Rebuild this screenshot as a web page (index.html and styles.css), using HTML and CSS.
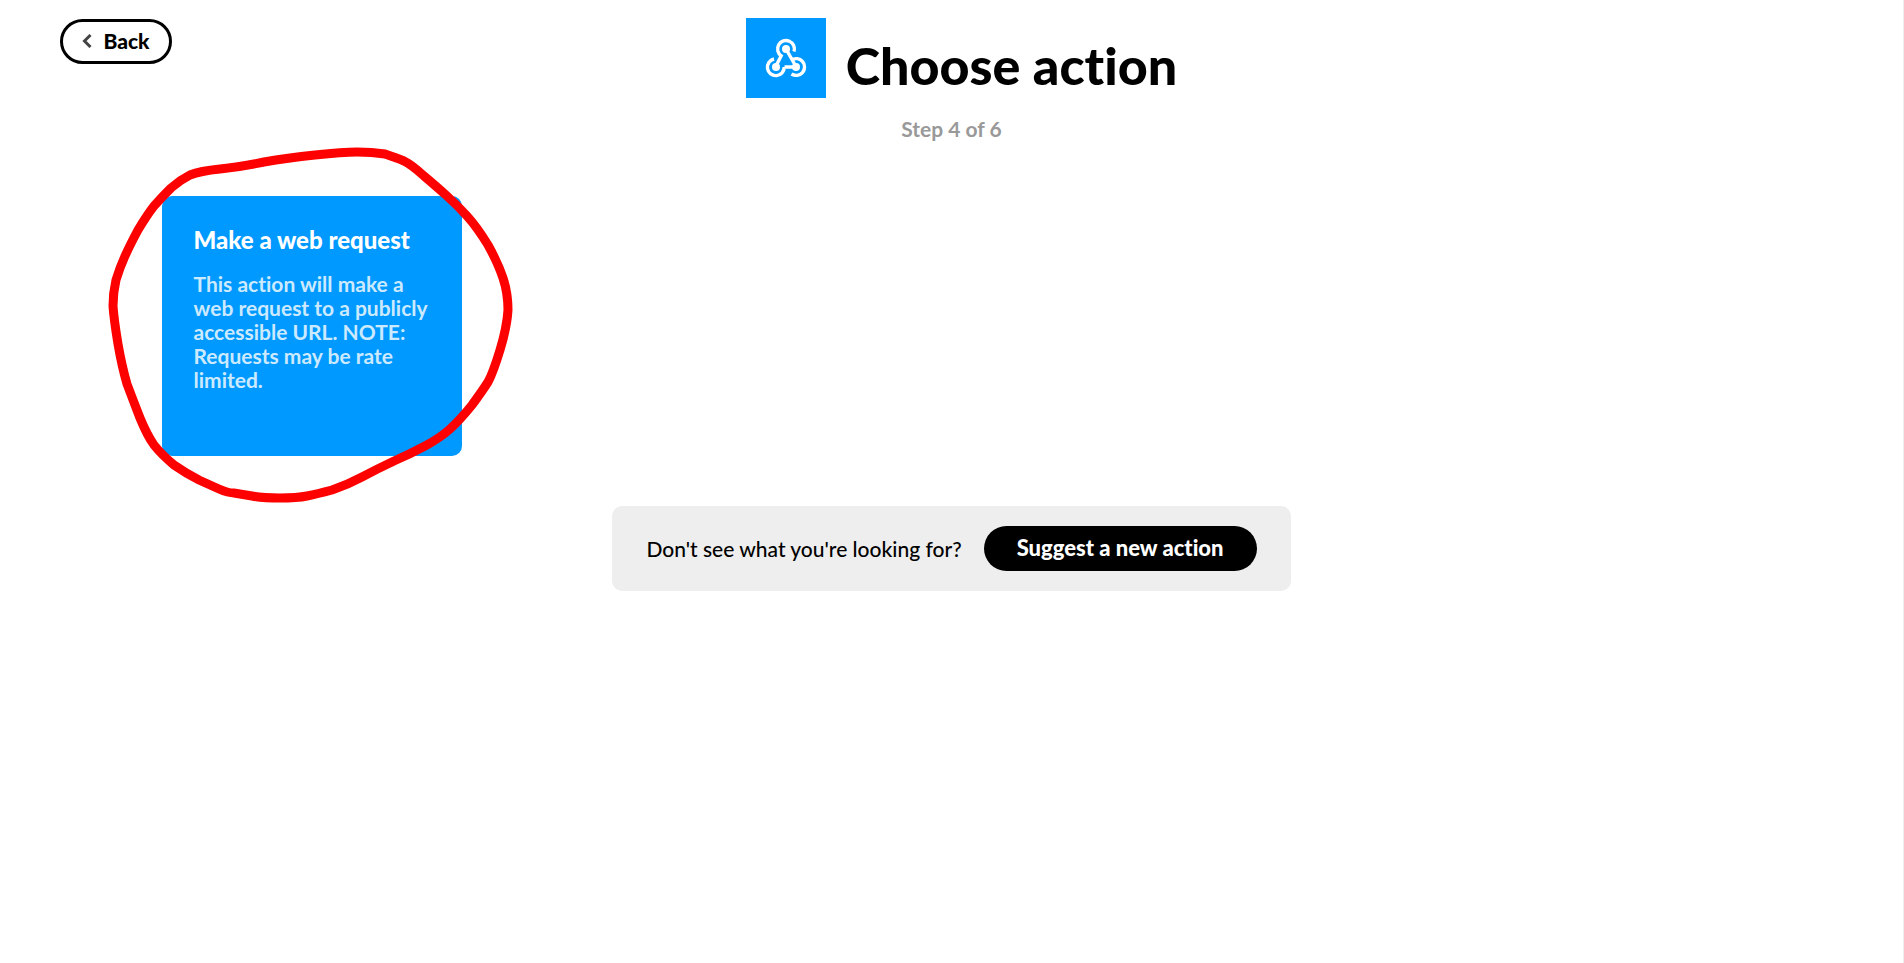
FILE: index.html
```html
<!DOCTYPE html>
<html lang="en">
<head>
    <meta charset="UTF-8">
    <meta name="viewport" content="width=device-width, initial-scale=1.0">
    <title>Choose action</title>
    <link rel="stylesheet" href="styles.css">
</head>
<body>
    <header class="header">
        <button class="back-btn" type="button">
            <svg class="back-arrow" viewBox="0 0 10 14" aria-hidden="true">
                <path d="M8.5 1 L2.5 7 L8.5 13" />
            </svg>
            Back
        </button>
        <div class="heading">
            <svg class="service-icon" viewBox="0 0 80 80" aria-hidden="true">
                <rect class="icon-bg" width="80" height="80" />
                <path class="icon-line" d="M40 31 L50 48.5 M51 49 H38.5" />
                <path class="icon-line" d="M48 33.5 A8.4 8.4 0 1 0 35.2 37.8 L30 48" />
                <path class="icon-line" d="M28 41 A8.4 8.4 0 1 0 38.2 49" />
                <path class="icon-line" d="M45.5 42 A8.4 8.4 0 1 1 45.5 56" />
                <circle class="icon-dot" cx="40" cy="31" r="4" />
                <circle class="icon-dot" cx="30" cy="49" r="4" />
                <circle class="icon-dot" cx="50" cy="49" r="4" />
            </svg>
            <h1>Choose action</h1>
        </div>
        <p class="step">Step 4 of 6</p>
    </header>

    <main>
        <div class="actions">
            <div class="action">
                <a class="card" href="#">
                    <h2>Make a web request</h2>
                    <p>This action will make a web request to a publicly accessible URL. NOTE: Requests may be rate limited.</p>
                </a>
                <svg class="marker" viewBox="0 0 420 380" aria-hidden="true">
                    <path d="M255 16 Q241 16 213 19 T162 26 Q138 31 118 33 Q98 35 88 39 Q78 44 69 52 Q60 61 52 70 Q45 79 36 94 Q28 109 23 120 Q18 131 14 144 Q11 157 11 170 Q12 184 16 208 Q20 231 25 248 Q31 264 38 282 Q45 299 52 309 Q60 319 72 329 Q85 338 97 344 Q108 349 117 353 Q126 357 132 357 Q138 358 150 360 Q161 362 178 362 Q195 362 205 360 Q215 358 230 354 Q245 349 260 341 Q275 333 292 325 Q308 318 323 310 Q338 302 348 293 Q358 284 370 269 Q381 254 386 246 Q391 237 398 214 Q405 191 406 174 Q406 157 401 142 Q396 127 386 109 Q375 91 365 80 Q355 69 345 60 Q335 51 322 40 Q310 29 302 25 Q295 22 283 18 Q270 16 255 16 Z" />
                </svg>
            </div>
        </div>

        <div class="suggest">
            <span>Don't see what you're looking for?</span>
            <button class="suggest-btn" type="button">Suggest a new action</button>
        </div>
    </main>
</body>
</html>
```
FILE: styles.css
```css
* {
    margin: 0;
    padding: 0;
    box-sizing: border-box;
}

body {
    font-family: Lato, 'Liberation Sans', sans-serif;
    font-size: 21px;
    line-height: 24px;
    font-variant-ligatures: none;
    min-height: 100vh;
    background: #fff;
    border-right: 1px solid #eee;
    color: #000;
}

button {
    font: inherit;
    font-variant-ligatures: none;
    cursor: pointer;
}

.header {
    position: relative;
    padding-top: 18px;
    text-align: center;
}

.back-btn {
    position: absolute;
    top: 19px;
    left: 60px;
    display: flex;
    align-items: center;
    justify-content: center;
    gap: 11px;
    width: 112px;
    height: 45px;
    padding-bottom: 2px;
    background: #fff;
    border: 3px solid #000;
    border-radius: 23px;
    font-weight: 900;
}

.back-arrow {
    width: 10px;
    height: 14px;
    fill: none;
    stroke: #444;
    stroke-width: 3;
}

.heading {
    display: flex;
    justify-content: center;
}

.service-icon {
    width: 80px;
    height: 80px;
    margin: 0 20px;
}

.icon-bg {
    fill: #0099ff;
}

.icon-line {
    fill: none;
    stroke: #fff;
    stroke-width: 3.4;
}

.icon-dot {
    fill: #fff;
}

h1 {
    padding-top: 17px;
    font-size: 52px;
    line-height: 60px;
    font-weight: 900;
}

.step {
    margin-top: 19px;
    color: #999;
    font-weight: 700;
}

.actions {
    display: grid;
    grid-template-columns: repeat(auto-fill, 300px);
    gap: 20px;
    max-width: 1580px;
    margin: 55px auto 50px;
}

.action {
    position: relative;
}

.card {
    display: block;
    min-height: 260px;
    padding: 32px;
    background: #0099ff;
    border-radius: 10px;
    color: #fff;
    text-decoration: none;
}

.card h2 {
    margin-bottom: 20px;
    font-size: 24px;
    line-height: 24px;
    font-weight: 900;
}

.card p {
    color: #cceaff;
    font-weight: 700;
}

/* hand-drawn circle around the card */
.marker {
    position: absolute;
    top: -60px;
    left: -60px;
    width: 420px;
    height: 380px;
    pointer-events: none;
    fill: none;
    stroke: #ff0000;
    stroke-width: 9;
}

.suggest {
    display: flex;
    align-items: center;
    justify-content: center;
    gap: 22px;
    width: fit-content;
    margin: 0 auto;
    padding: 20px 34px;
    background: #eee;
    border-radius: 10px;
    font-weight: 500;
}

.suggest-btn {
    height: 45px;
    padding: 0 33px 2px;
    background: #000;
    border: none;
    border-radius: 23px;
    color: #fff;
    font-size: 22px;
    font-weight: 900;
}
```
